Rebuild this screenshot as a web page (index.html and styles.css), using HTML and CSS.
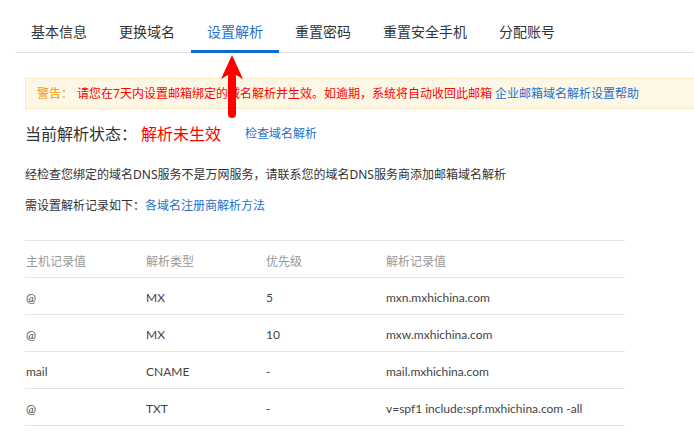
FILE: index.html
```html
<!DOCTYPE html>
<html lang="zh-CN">
<head>
    <meta charset="UTF-8">
    <meta name="viewport" content="width=device-width, initial-scale=1.0">
    <title>设置解析</title>
    <link rel="stylesheet" href="styles.css">
</head>
<body>
    <div class="page">
        <ul class="tabs">
            <li class="tab">基本信息</li>
            <li class="tab">更换域名</li>
            <li class="tab active">设置解析</li>
            <li class="tab">重置密码</li>
            <li class="tab">重置安全手机</li>
            <li class="tab">分配账号</li>
        </ul>

        <div class="content">
            <div class="warning">
                <span class="warn-label">警告：</span><span class="warn-text">请您在7天内设置邮箱绑定的域名解析并生效。如逾期，系统将自动收回此邮箱</span>
                <a class="link" href="#">企业邮箱域名解析设置帮助</a>
            </div>

            <div class="status">
                <span class="status-label">当前解析状态：</span>
                <span class="status-value">解析未生效</span>
                <a class="link small" href="#">检查域名解析</a>
            </div>

            <p class="note">经检查您绑定的域名DNS服务不是万网服务，请联系您的域名DNS服务商添加邮箱域名解析</p>
            <p class="note note-2">需设置解析记录如下：<a class="link" href="#">各域名注册商解析方法</a></p>

            <table class="records">
                <thead>
                    <tr>
                        <th>主机记录值</th>
                        <th>解析类型</th>
                        <th>优先级</th>
                        <th>解析记录值</th>
                    </tr>
                </thead>
                <tbody>
                    <tr><td>@</td><td>MX</td><td>5</td><td>mxn.mxhichina.com</td></tr>
                    <tr><td>@</td><td>MX</td><td>10</td><td>mxw.mxhichina.com</td></tr>
                    <tr><td>mail</td><td>CNAME</td><td>-</td><td>mail.mxhichina.com</td></tr>
                    <tr><td>@</td><td>TXT</td><td>-</td><td>v=spf1 include:spf.mxhichina.com -all</td></tr>
                </tbody>
            </table>
        </div>

        <!-- annotation arrow pointing at the active tab -->
        <svg class="pointer" width="26" height="64" viewBox="0 0 26 64">
            <path d="M13 0 L24 24 Q19 21 17 20 L17 59 Q17 63 13 63 Q9 63 9 59 L9 20 Q7 21 2 24 Z" fill="#ff0000"/>
        </svg>
    </div>
</body>
</html>
```

FILE: styles.css
```css
body {
    margin: 0;
    font-family: "Noto Sans", "Noto Sans CJK SC", sans-serif;
    color: #333;
    background: #fff;
    overflow: hidden;
}
.page {
    position: relative;
    width: 694px;
    height: 437px;
    overflow: hidden;
}
.tabs {
    display: flex;
    list-style: none;
    margin: 0 0 0 15px;
    padding: 0;
    border-bottom: 1px solid #e4e4e4;
    width: 760px;
}
.tab {
    font-size: 14px;
    line-height: 20px;
    padding: 22px 16px 8px;
    border-bottom: 3px solid transparent;
    margin-bottom: -1px;
    color: #333;
}
.tab.active {
    color: #2572c9;
    border-bottom-color: #0f6bcf;
}
.content {
    padding-left: 25px;
}
.warning {
    margin-top: 25px;
    width: 700px;
    box-sizing: border-box;
    background: #fdf8e6;
    border: 1px solid #f9ebc6;
    padding: 6px 11px 5px;
    font-size: 12px;
    line-height: 18px;
    white-space: nowrap;
}
.warn-label {
    color: #f39800;
    margin-right: 4px;
}
.warn-text {
    color: #ff0000;
}
.link {
    color: #1e6fcc;
    text-decoration: none;
}
.status {
    margin-top: 13px;
    display: flex;
    align-items: center;
    line-height: 24px;
}
.status-label {
    font-size: 16px;
    color: #333;
    padding-right: 4px;
}
.status-value {
    font-size: 16px;
    color: #ff0000;
    margin-right: 24px;
}
.link.small {
    font-size: 12px;
}
.note {
    margin: 19px 0 0;
    font-size: 12px;
    line-height: 20px;
}
.note-2 {
    margin-top: 11px;
}
.records {
    margin-top: 24px;
    width: 600px;
    border-collapse: collapse;
    border-top: 1px solid #e4e4e4;
    font-family: Lato, "Noto Sans CJK SC", sans-serif;
    font-size: 12px;
    table-layout: fixed;
}
.records th,
.records td {
    height: 34px;
    padding: 2px 1px 0;
    text-align: left;
    border-bottom: 1px solid #e4e4e4;
    white-space: nowrap;
}
.records th:nth-child(-n+3),
.records td:nth-child(-n+3) {
    width: 118px;
}
.records th {
    color: #999;
    font-weight: normal;
}
.records td {
    color: #444;
}
.pointer {
    position: absolute;
    left: 219px;
    top: 55px;
}
```
